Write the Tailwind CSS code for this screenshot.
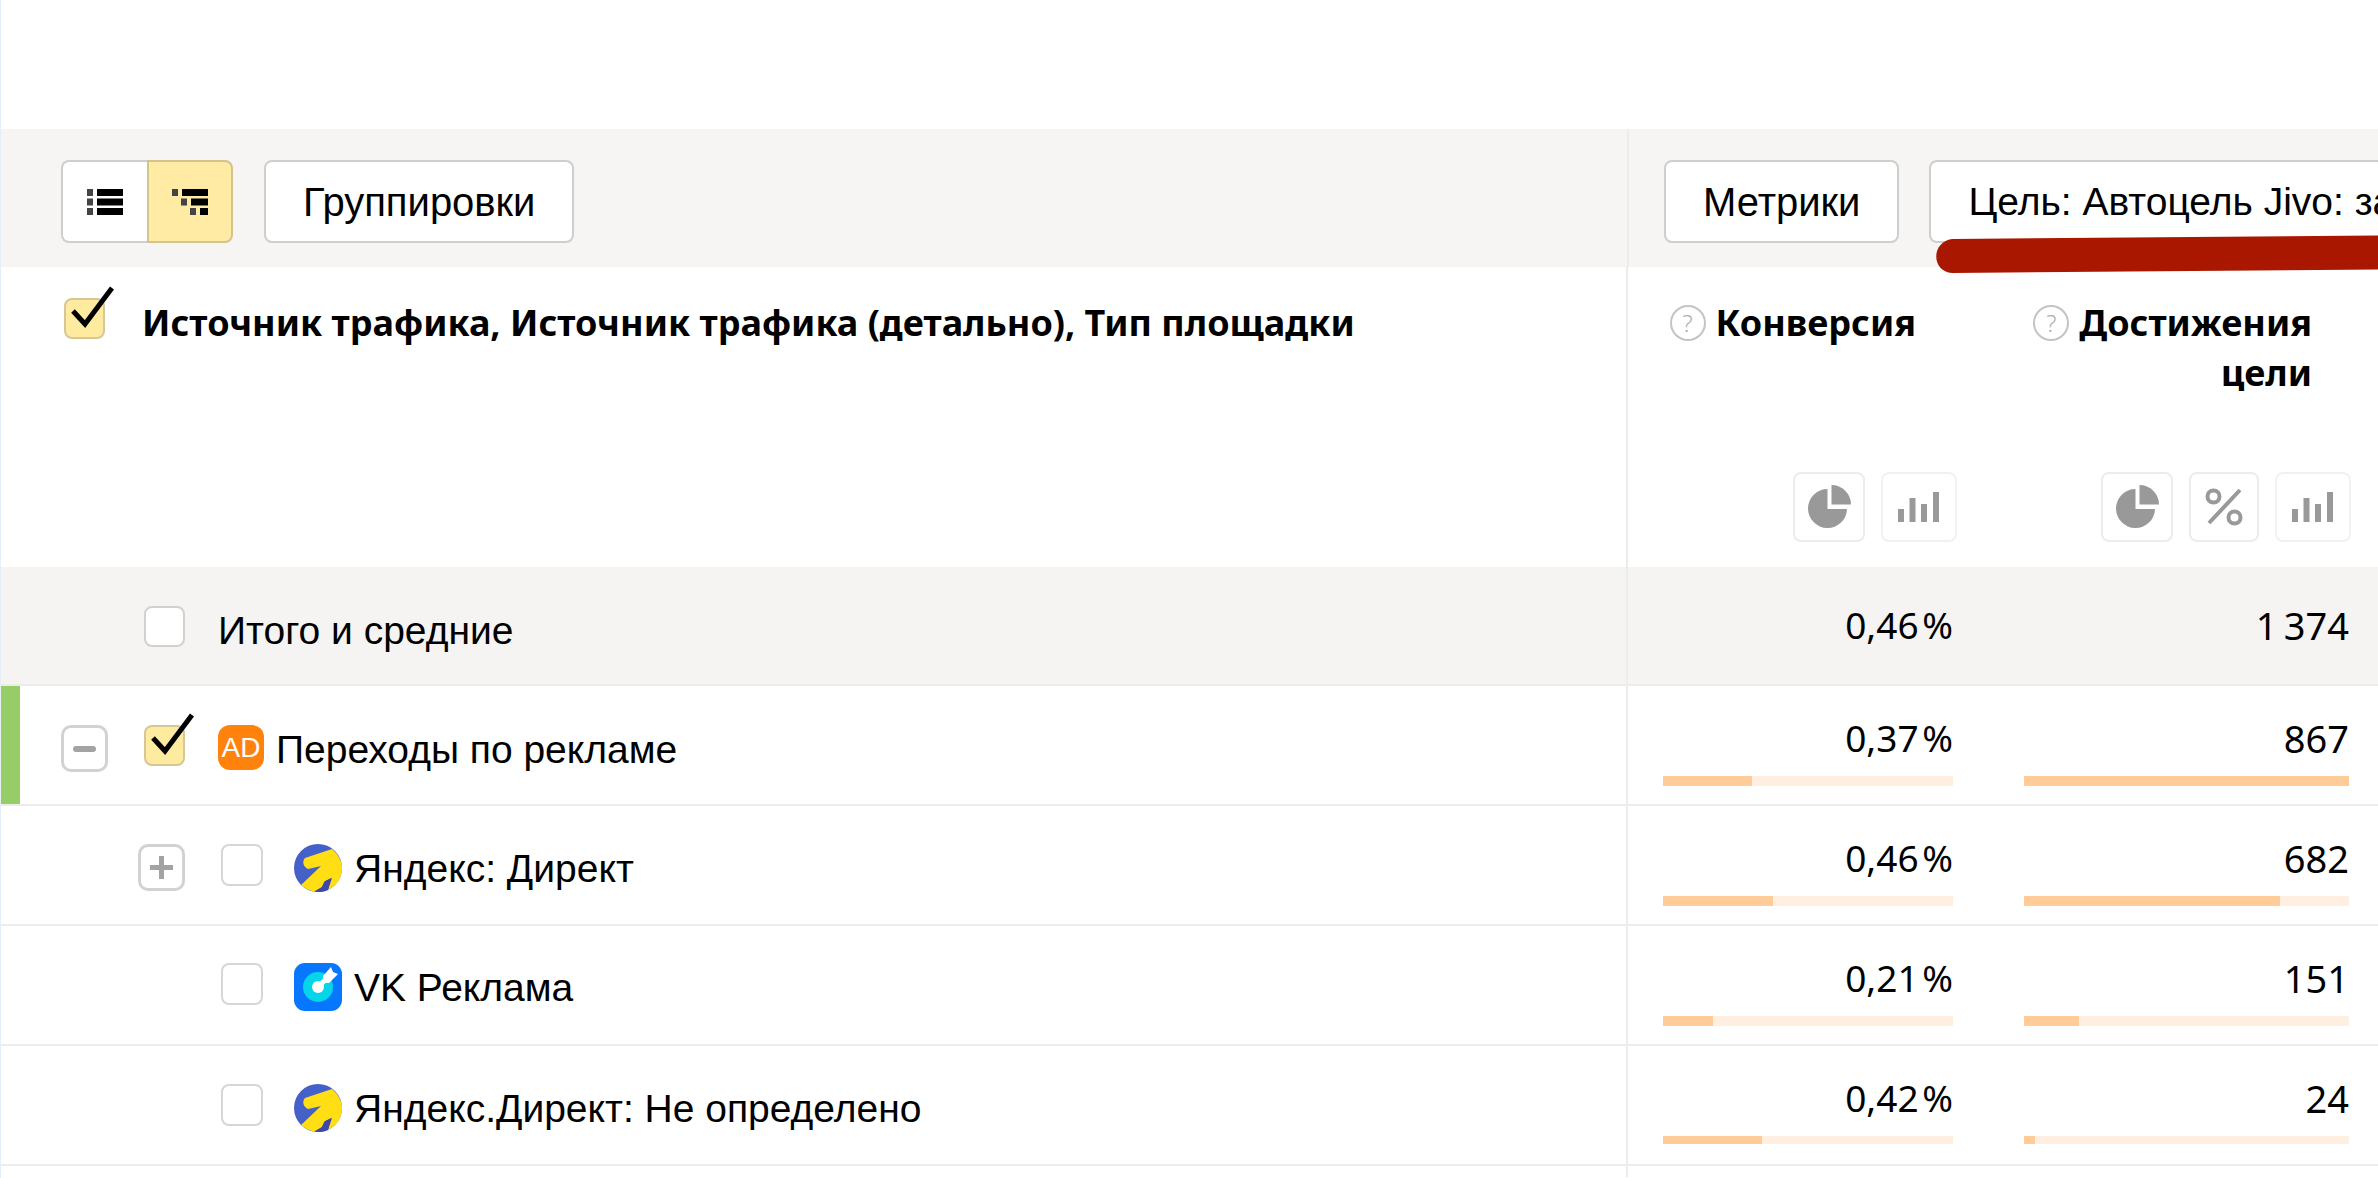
<!DOCTYPE html>
<html lang="ru">
<head>
<meta charset="utf-8">
<title>Источники трафика</title>
<script src="https://cdn.jsdelivr.net/npm/@tailwindcss/browser@4"></script>
</head>
<body class="min-h-screen overflow-x-hidden border-l border-[#e6eff6] bg-white pt-[129px] font-['Liberation_Sans',Arial,sans-serif] text-[39px] leading-[50px] text-black">

<svg class="hidden" aria-hidden="true">
  <symbol id="tick" viewBox="0 0 52 62"><path d="M9 26 L21 39 L48 3" fill="none" stroke="#000" stroke-width="5"/></symbol>
  <symbol id="pie" viewBox="0 0 44 44"><path d="M20.500 4 A19.500 19.500 0 1 0 40 24 H20.500 Z" fill="#999"/><path d="M24.500 0 A19.500 19.500 0 0 1 44 19.500 H24.500 Z" fill="#999"/></symbol>
  <symbol id="bars" viewBox="0 0 42 30"><path d="M0 17h6v13H0z M11.500 6h6v24h-6z M23 12h6v18h-6z M35 0h6v30h-6z" fill="#999"/></symbol>
  <symbol id="direct" viewBox="0 0 48 48">
    <circle cx="24" cy="24" r="24" fill="#4560c8"/>
    <path d="M38 5 C44 10 48 17 48 24 C48 34 43 41 34 46 L37 34 L30 38 L28 43 L20 47.500 C15 46.500 11 44.500 7 41 L27 22 L14 25 C9 23 8 17 11 14 Z" fill="#ffde14"/>
    <path d="M34 46 L38 34 L31 37 L28 43 L21 47.500 C26 48.500 30 48 34 46 Z" fill="#3f46a8"/>
  </symbol>
</svg>

<header class="flex h-[138px] bg-[#f6f5f3]">
  <div class="flex flex-1 items-start gap-[31px] pt-[31px] pl-[60px]">
    <div class="flex h-[83px] w-[172px]">
      <button type="button" aria-label="Список" class="flex w-[86px] items-center justify-center rounded-l-lg border-2 border-r-0 border-[#cfcecc] bg-white">
        <svg class="h-[26px] w-[36px]" viewBox="0 0 36 26"><path d="M0 0h6v7H0z M0 9.500h6v7H0z M0 19h6v7H0z" fill="#444"/><path d="M10 0h26v7H10z M10 9.500h26v7H10z M10 19h26v7H10z"/></svg>
      </button>
      <button type="button" aria-label="Дерево" aria-pressed="true" class="flex w-[86px] items-center justify-center rounded-r-lg border-2 border-[#d3c48b] bg-[#ffeba4]">
        <svg class="h-[26px] w-[36px]" viewBox="0 0 36 26"><path d="M0 0h6v7H0z M9 9.500h6v7H9z M18 19h6v7h-6z" fill="#444"/><path d="M10 0h26v7H10z M19 9.500h17v7H19z M28 19h8v7h-8z"/></svg>
      </button>
    </div>
    <button type="button" class="h-[83px] rounded-lg border-2 border-[#cfcecc] bg-white px-[37px] text-[40px]">Группировки</button>
  </div>
  <div class="relative flex w-[751px] items-start gap-[30px] border-l-2 border-[#ececeb] pt-[31px] pl-[35px]">
    <button type="button" class="h-[83px] rounded-lg border-2 border-[#cfcecc] bg-white px-[37px] text-[40px]">Метрики</button>
    <button type="button" class="h-[83px] flex-1 overflow-hidden rounded-l-lg border-2 border-r-0 border-[#cfcecc] bg-white pl-[37px] text-left whitespace-nowrap">Цель: Автоцель Jivo: за</button>
    <svg class="absolute top-[105px] right-0 h-[40px] w-[442px]" viewBox="0 0 442 40" preserveAspectRatio="none" aria-hidden="true"><path d="M16 5 L442 1.500 V35.500 L16 39 C-5 37 -5 8 16 5 Z" fill="#aa1700"/></svg>
  </div>
</header>

<table class="w-full table-fixed border-collapse">
  <colgroup><col><col class="w-[362px]"><col class="w-[389px]"></colgroup>
  <thead class="font-['Noto_Sans',sans-serif] text-[36px]">
    <tr class="h-[300px] align-top">
      <th scope="col" class="p-0 text-left font-bold">
        <div class="flex pt-[31px] pl-[63px]">
          <label class="relative mr-[37px] size-[41px]">
            <input type="checkbox" checked aria-label="Выбрать все" class="block size-[41px] appearance-none rounded-lg border-2 border-[#d6c794] bg-[#ffeba0]">
            <svg class="pointer-events-none absolute -top-[13px] left-0 h-[62px] w-[52px]"><use href="#tick"/></svg>
          </label>
          <span class="whitespace-nowrap">Источник трафика, Источник трафика (детально), Тип площадки</span>
        </div>
      </th>
      <th scope="col" class="border-l-2 border-[#ececeb] p-0 font-bold">
        <div class="flex h-[300px] flex-col justify-between pt-[31px] pb-[25px]">
          <div class="flex justify-end gap-[10px] pr-[73px] text-right">
            <button type="button" aria-label="Справка: Конверсия" class="mt-[7px] flex size-[36px] items-center justify-center rounded-full border-2 border-[#c4c4c4] font-['Noto_Sans',sans-serif] text-[24px] leading-[24px] font-light text-[#b0b0b0]">?</button>
            <span>Конверсия</span>
          </div>
          <div class="flex justify-end gap-[16px] pr-[32px]">
            <button type="button" aria-label="Круговая диаграмма" class="flex h-[70px] w-[72px] items-center justify-center rounded-lg border-2 border-[#ececec]"><svg class="size-[44px]"><use href="#pie"/></svg></button>
            <button type="button" aria-label="Гистограмма" class="flex h-[70px] w-[76px] items-center justify-center rounded-lg border-2 border-[#f1f1f1]"><svg class="h-[30px] w-[42px]"><use href="#bars"/></svg></button>
          </div>
        </div>
      </th>
      <th scope="col" class="p-0 font-bold">
        <div class="flex h-[300px] flex-col justify-between pt-[31px] pb-[25px]">
          <div class="flex justify-end gap-[10px] pr-[66px] text-right">
            <button type="button" aria-label="Справка: Достижения цели" class="mt-[7px] flex size-[36px] items-center justify-center rounded-full border-2 border-[#c4c4c4] font-['Noto_Sans',sans-serif] text-[24px] leading-[24px] font-light text-[#b0b0b0]">?</button>
            <span>Достижения<br>цели</span>
          </div>
          <div class="flex justify-end gap-[16px] pr-[27px]">
            <button type="button" aria-label="Круговая диаграмма" class="flex h-[70px] w-[72px] items-center justify-center rounded-lg border-2 border-[#ececec]"><svg class="size-[44px]"><use href="#pie"/></svg></button>
            <button type="button" aria-label="Проценты" class="flex h-[70px] w-[70px] items-center justify-center rounded-lg border-2 border-[#ececec]"><svg class="h-[38px] w-[38px]" viewBox="0 0 38 38" fill="none" stroke="#999" stroke-width="4"><path d="M35 2 L4 35"/><circle cx="8.500" cy="8.500" r="6"/><circle cx="29.500" cy="29.500" r="6"/></svg></button>
            <button type="button" aria-label="Гистограмма" class="flex h-[70px] w-[76px] items-center justify-center rounded-lg border-2 border-[#f1f1f1]"><svg class="h-[30px] w-[42px]"><use href="#bars"/></svg></button>
          </div>
        </div>
      </th>
    </tr>
  </thead>
  <tbody>
    <tr class="h-[118px] border-b-2 border-[#ececeb] bg-[#f5f4f2]">
      <td class="p-0">
        <div class="flex h-[116px] items-start gap-[33px] pt-[38px] pl-[143px]">
          <input id="r0" type="checkbox" class="size-[41px] appearance-none rounded-lg border-2 border-[#d2d1cf] bg-white">
          <label for="r0">Итого и средние</label>
        </div>
      </td>
      <td class="border-l-2 border-[#ececeb] p-0 pr-[36px] pb-[2px] text-right font-['Noto_Sans',sans-serif] text-[37px]">0,46&#8202;%</td>
      <td class="p-0 pr-[29px] pb-[2px] text-right font-['Noto_Sans',sans-serif] text-[38px]">1&#8201;374</td>
    </tr>
    <tr class="h-[120px] border-b-2 border-[#ececeb]">
      <td class="p-0">
        <div class="flex h-[118px] items-start border-l-[19px] border-[#97cd66] pt-[39px] pl-[41px]">
          <button type="button" aria-label="Свернуть" aria-expanded="true" class="flex size-[47px] items-center justify-center rounded-[10px] border-[3px] border-[#d2d2d2] bg-white"><span class="h-[6px] w-[23px] rounded-sm bg-[#a3a3a3]"></span></button>
          <div class="relative ml-[36px] size-[41px]">
            <input id="r1" type="checkbox" checked class="block size-[41px] appearance-none rounded-lg border-2 border-[#d6c794] bg-[#ffeba0]">
            <svg class="pointer-events-none absolute -top-[13px] left-0 h-[62px] w-[52px]"><use href="#tick"/></svg>
          </div>
          <span class="ml-[33px] flex h-[45px] w-[46px] items-center justify-center rounded-xl bg-[#ff820c] text-[28px] leading-[30px] text-white">AD</span>
          <label for="r1" class="ml-[12px]">Переходы по рекламе</label>
        </div>
      </td>
      <td class="border-l-2 border-[#ececeb] p-0">
        <div class="flex h-[118px] flex-col pt-[27px] pr-[36px] pl-[35px] text-right font-['Noto_Sans',sans-serif] text-[37px]">0,37&#8202;%<div class="mt-[13px] h-[10px] bg-[#feefe0]"><div class="h-full bg-[#ffcc99]" style="width:30.6%"></div></div></div>
      </td>
      <td class="p-0">
        <div class="flex h-[118px] flex-col pt-[27px] pr-[29px] pl-[35px] text-right font-['Noto_Sans',sans-serif] text-[38px]">867<div class="mt-[13px] h-[10px] bg-[#feefe0]"><div class="h-full bg-[#ffcc99]" style="width:100%"></div></div></div>
      </td>
    </tr>
    <tr class="h-[120px] border-b-2 border-[#ececeb]">
      <td class="p-0">
        <div class="flex h-[118px] items-start pt-[38px] pl-[137px]">
          <button type="button" aria-label="Развернуть" aria-expanded="false" class="flex size-[47px] items-center justify-center rounded-[10px] border-[3px] border-[#d2d2d2] bg-white"><svg class="size-[23px]" viewBox="0 0 23 23"><path d="M11.500 0V23M0 11.500H23" stroke="#a3a3a3" stroke-width="5"/></svg></button>
          <input id="r2" type="checkbox" class="ml-[36px] size-[42px] appearance-none rounded-lg border-2 border-[#d6d6d6] bg-white">
          <svg class="ml-[31px] size-[48px]" aria-hidden="true"><use href="#direct"/></svg>
          <label for="r2" class="ml-[12px]">Яндекс: Директ</label>
        </div>
      </td>
      <td class="border-l-2 border-[#ececeb] p-0">
        <div class="flex h-[118px] flex-col pt-[27px] pr-[36px] pl-[35px] text-right font-['Noto_Sans',sans-serif] text-[37px]">0,46&#8202;%<div class="mt-[13px] h-[10px] bg-[#feefe0]"><div class="h-full bg-[#ffcc99]" style="width:38%"></div></div></div>
      </td>
      <td class="p-0">
        <div class="flex h-[118px] flex-col pt-[27px] pr-[29px] pl-[35px] text-right font-['Noto_Sans',sans-serif] text-[38px]">682<div class="mt-[13px] h-[10px] bg-[#feefe0]"><div class="h-full bg-[#ffcc99]" style="width:78.8%"></div></div></div>
      </td>
    </tr>
    <tr class="h-[120px] border-b-2 border-[#ececeb]">
      <td class="p-0">
        <div class="flex h-[118px] items-start pt-[37px] pl-[220px]">
          <input id="r3" type="checkbox" class="size-[42px] appearance-none rounded-lg border-2 border-[#d6d6d6] bg-white">
          <svg class="ml-[31px] size-[48px]" viewBox="0 0 48 48" aria-hidden="true">
            <rect width="48" height="48" rx="11" fill="#0877ff"/>
            <circle cx="24" cy="24" r="15" fill="#05d5e8"/>
            <circle cx="24" cy="24" r="6" fill="#fff"/>
            <path d="M24 24 L33 15" stroke="#fff" stroke-width="5"/>
            <path d="M29 13 L37 4 L39 9 L44 11 L35 20 L29 20 Z" fill="#fff"/>
          </svg>
          <label for="r3" class="ml-[12px]">VK Реклама</label>
        </div>
      </td>
      <td class="border-l-2 border-[#ececeb] p-0">
        <div class="flex h-[118px] flex-col pt-[27px] pr-[36px] pl-[35px] text-right font-['Noto_Sans',sans-serif] text-[37px]">0,21&#8202;%<div class="mt-[13px] h-[10px] bg-[#feefe0]"><div class="h-full bg-[#ffcc99]" style="width:17.4%"></div></div></div>
      </td>
      <td class="p-0">
        <div class="flex h-[118px] flex-col pt-[27px] pr-[29px] pl-[35px] text-right font-['Noto_Sans',sans-serif] text-[38px]">151<div class="mt-[13px] h-[10px] bg-[#feefe0]"><div class="h-full bg-[#ffcc99]" style="width:17%"></div></div></div>
      </td>
    </tr>
    <tr class="h-[120px] border-b-2 border-[#ececeb]">
      <td class="p-0">
        <div class="flex h-[118px] items-start pt-[38px] pl-[220px]">
          <input id="r4" type="checkbox" class="size-[42px] appearance-none rounded-lg border-2 border-[#d6d6d6] bg-white">
          <svg class="ml-[31px] size-[48px]" aria-hidden="true"><use href="#direct"/></svg>
          <label for="r4" class="ml-[12px]">Яндекс.Директ: Не определено</label>
        </div>
      </td>
      <td class="border-l-2 border-[#ececeb] p-0">
        <div class="flex h-[118px] flex-col pt-[27px] pr-[36px] pl-[35px] text-right font-['Noto_Sans',sans-serif] text-[37px]">0,42&#8202;%<div class="mt-[13px] h-[8px] bg-[#feefe0]"><div class="h-full bg-[#ffcc99]" style="width:34%"></div></div></div>
      </td>
      <td class="p-0">
        <div class="flex h-[118px] flex-col pt-[27px] pr-[29px] pl-[35px] text-right font-['Noto_Sans',sans-serif] text-[38px]">24<div class="mt-[13px] h-[8px] bg-[#feefe0]"><div class="h-full bg-[#ffcc99]" style="width:3.4%"></div></div></div>
      </td>
    </tr>
    <tr class="h-[12px]"><td class="p-0"></td><td class="border-l-2 border-[#ececeb] p-0"></td><td class="p-0"></td></tr>
  </tbody>
</table>
</body>
</html>
